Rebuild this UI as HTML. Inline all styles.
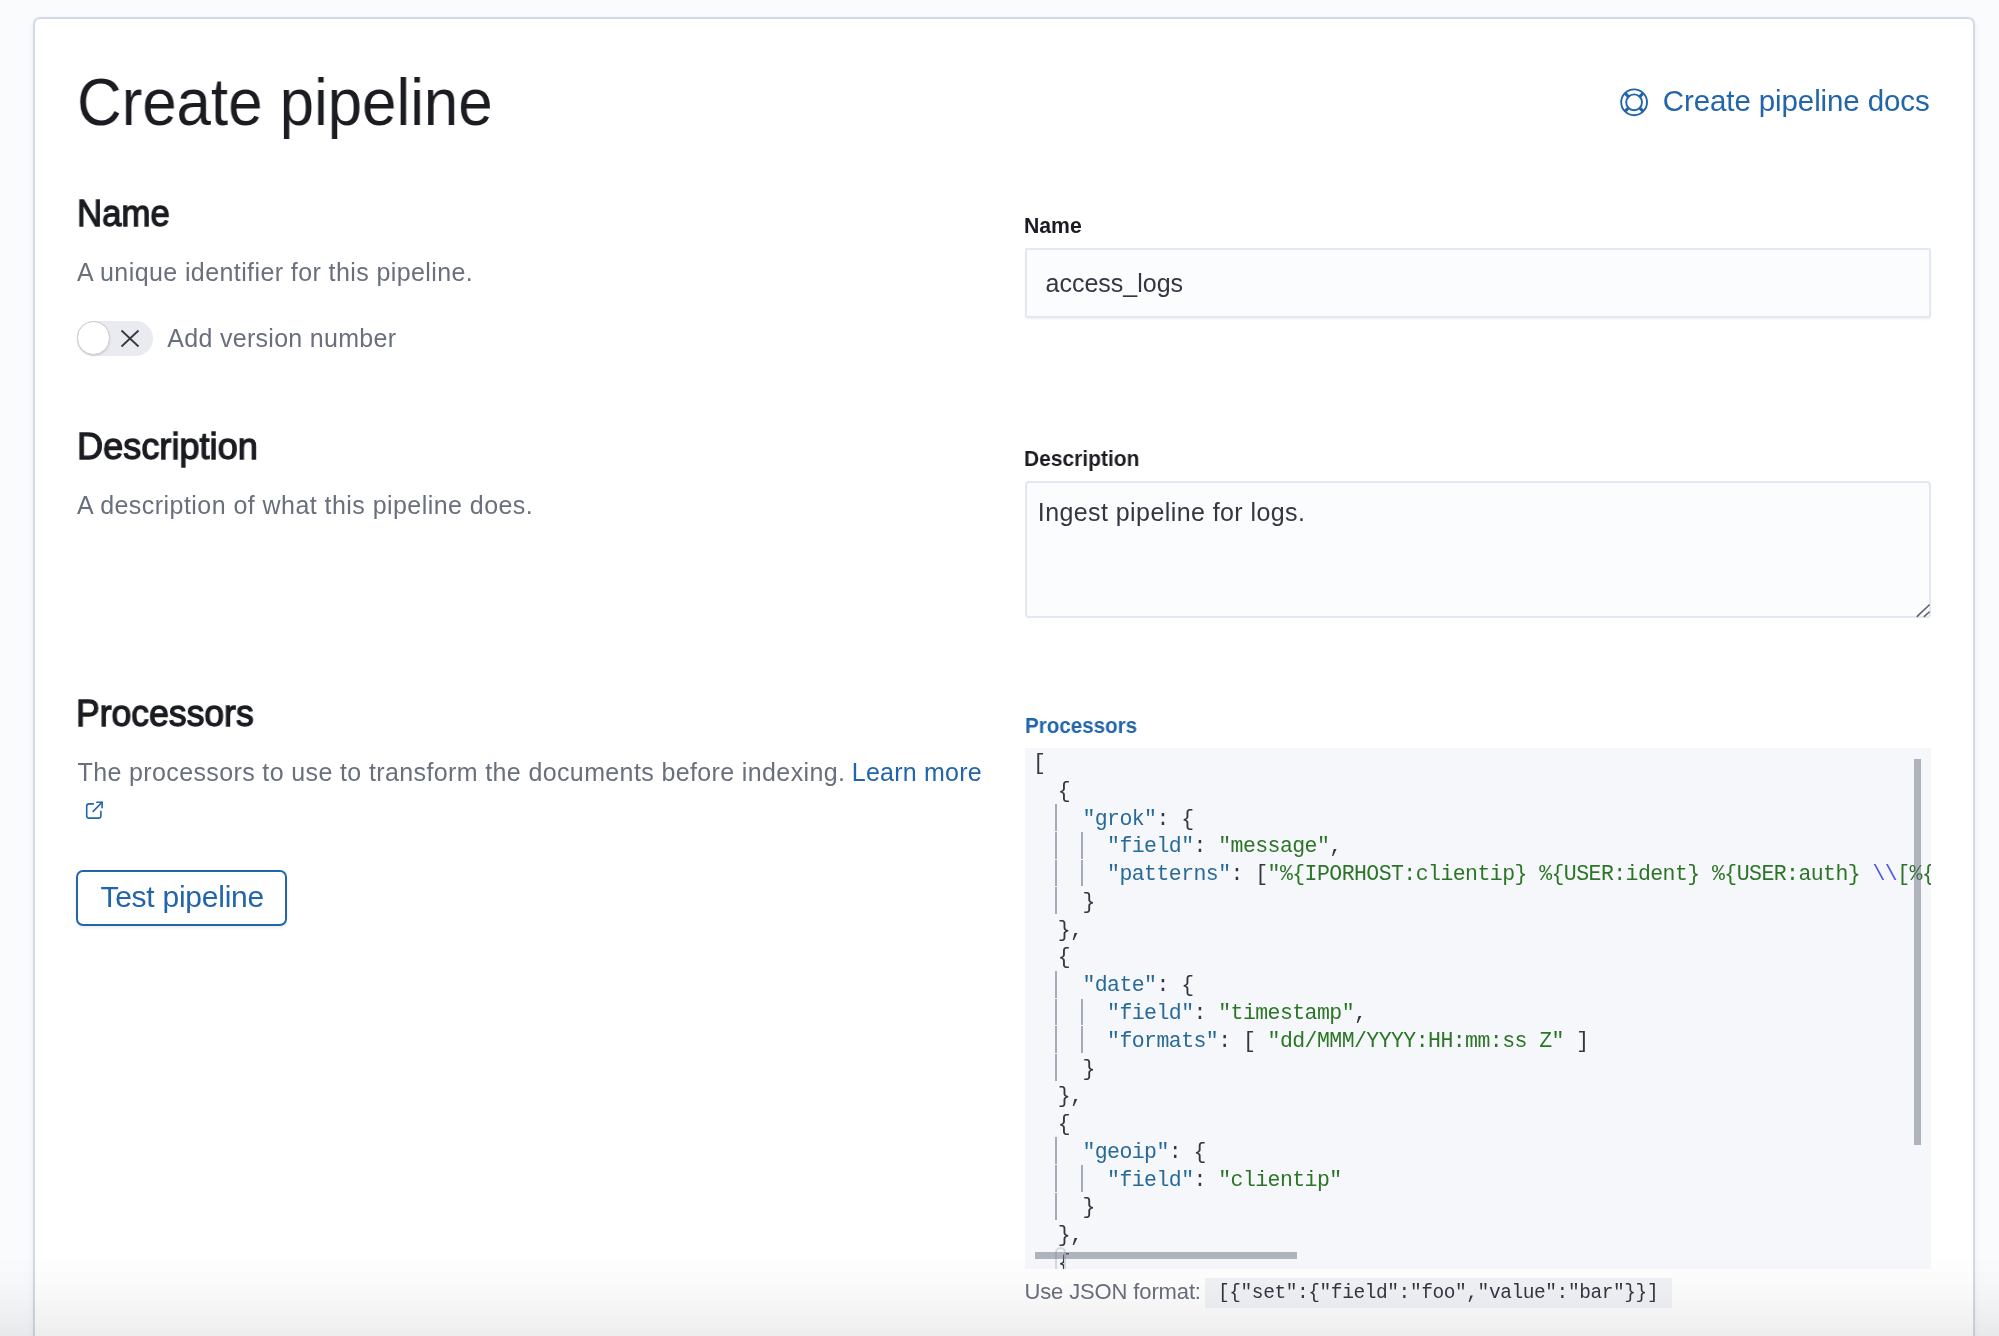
<!DOCTYPE html>
<html><head><meta charset="utf-8"><title>Create pipeline</title>
<style>
html,body{margin:0;padding:0;}
body{width:1999px;height:1336px;overflow:hidden;will-change:transform;background:#FAFBFD;position:relative;font-family:'Liberation Sans', sans-serif;}
.panel{position:absolute;left:33px;top:17px;width:1938px;height:1400px;background:#fff;border:2px solid #D3DAE6;border-radius:7px;box-shadow:0 1px 4px rgba(0,0,0,0.05),0 3px 10px rgba(0,0,0,0.035);}
.t{position:absolute;white-space:pre;}
.input{position:absolute;left:1025px;width:906px;background:#FBFCFD;box-shadow:inset 0 0 0 2px #E4E7EF, 0 2px 3px -1px rgba(152,162,179,0.18);border-radius:2px;}
.code{position:absolute;left:1025px;top:748px;width:906px;height:521px;background:#F5F7FA;overflow:hidden;}
.cl{position:absolute;left:8px;height:27.78px;line-height:27.78px;font-family:'Liberation Mono', monospace;font-size:21.5px;letter-spacing:-0.557px;white-space:pre;color:#343741;}
.guide{position:absolute;width:2px;background:#A3AABA;}
.fade{position:absolute;left:0;top:1256px;width:1999px;height:80px;background:linear-gradient(to bottom, rgba(0,0,0,0) 0%, rgba(0,0,0,0.018) 40%, rgba(0,0,0,0.045) 70%, rgba(0,0,0,0.072) 100%);}
</style></head><body>
<div class="panel"></div>
<!-- header icon -->
<svg style="position:absolute;left:1619px;top:87px" width="31" height="31" viewBox="0 0 31 31">
 <g fill="none" stroke="#2265AB" stroke-width="1.9">
  <circle cx="15.1" cy="15.3" r="12.9"/>
  <circle cx="15.1" cy="15.3" r="7.9"/>
 </g>
 <g stroke="#2265AB" stroke-width="3.2">
  <line x1="6.0" y1="6.2" x2="9.6" y2="9.8"/><line x1="24.2" y1="6.2" x2="20.6" y2="9.8"/>
  <line x1="6.0" y1="24.4" x2="9.6" y2="20.8"/><line x1="24.2" y1="24.4" x2="20.6" y2="20.8"/>
 </g>
</svg>
<!-- toggle -->
<div style="position:absolute;left:77px;top:321px;width:76px;height:35px;border-radius:18px;background:#E9EBF0"></div>
<div style="position:absolute;left:76.5px;top:321px;width:31.6px;height:31.6px;border-radius:50%;background:#fff;border:1.6px solid #C8CBD2;box-shadow:0 1px 2px rgba(0,0,0,0.12)"></div>
<svg style="position:absolute;left:120px;top:329px" width="20" height="19" viewBox="0 0 20 19"><g stroke="#343741" stroke-width="1.8"><line x1="1.5" y1="1.5" x2="18.5" y2="17.5"/><line x1="18.5" y1="1.5" x2="1.5" y2="17.5"/></g></svg>
<!-- external link icon -->
<svg style="position:absolute;left:75px;top:790px" width="40" height="40" viewBox="0 0 40 40"><g fill="none" stroke="#2265AB" stroke-width="1.6" stroke-linecap="round" stroke-linejoin="round"><path d="M18.3 13.9H14Q11.7 13.9 11.7 16.2V25.8Q11.7 28.1 14 28.1H23.6Q25.9 28.1 25.9 25.8V21.2"/><path d="M21.8 12.3H27.1V17.8"/><path d="M27.1 12.3L18.2 21.4"/></g></svg>
<!-- button -->
<div style="position:absolute;left:76px;top:870px;width:207px;height:52px;border:2px solid #2265AB;border-radius:7px;box-shadow:0 2px 3px rgba(0,0,0,0.08)"></div>
<!-- inputs -->
<div class="input" style="top:248px;height:70px"></div>
<div class="input" style="top:481px;height:137px;border-radius:4px;box-shadow:inset 0 0 0 2px #E4E7EF"></div>
<svg style="position:absolute;left:1910px;top:600px" width="21" height="19" viewBox="0 0 21 19"><g stroke="#5C5F66" stroke-width="1.5" stroke-linecap="round"><line x1="7.2" y1="16.4" x2="19.2" y2="5"/><line x1="14.4" y1="16.4" x2="19.2" y2="12"/></g></svg>
<!-- code editor -->
<div class="code">
<div class="cl" style="top:2.00px">[</div>
<div class="cl" style="top:29.78px">  {</div>
<div class="cl" style="top:57.56px">    <span style="color:#286A97">"grok"</span>: {</div>
<div class="cl" style="top:85.34px">      <span style="color:#286A97">"field"</span>: <span style="color:#2C7527">"message"</span>,</div>
<div class="cl" style="top:113.12px">      <span style="color:#286A97">"patterns"</span>: [<span style="color:#2C7527">"%{IPORHOST:clientip} %{USER:ident} %{USER:auth} </span><span style="color:#4F5BE0">\\</span><span style="color:#2C7527">[%{HTTPDATE:timestamp}</span></div>
<div class="cl" style="top:140.90px">    }</div>
<div class="cl" style="top:168.68px">  },</div>
<div class="cl" style="top:196.46px">  {</div>
<div class="cl" style="top:224.24px">    <span style="color:#286A97">"date"</span>: {</div>
<div class="cl" style="top:252.02px">      <span style="color:#286A97">"field"</span>: <span style="color:#2C7527">"timestamp"</span>,</div>
<div class="cl" style="top:279.80px">      <span style="color:#286A97">"formats"</span>: [ <span style="color:#2C7527">"dd/MMM/YYYY:HH:mm:ss Z"</span> ]</div>
<div class="cl" style="top:307.58px">    }</div>
<div class="cl" style="top:335.36px">  },</div>
<div class="cl" style="top:363.14px">  {</div>
<div class="cl" style="top:390.92px">    <span style="color:#286A97">"geoip"</span>: {</div>
<div class="cl" style="top:418.70px">      <span style="color:#286A97">"field"</span>: <span style="color:#2C7527">"clientip"</span></div>
<div class="cl" style="top:446.48px">    }</div>
<div class="cl" style="top:474.26px">  },</div>
<div class="cl" style="top:502.04px">  {</div>
<div class="guide" style="left:30.0px;top:56.06px;height:26.78px"></div>
<div class="guide" style="left:30.0px;top:83.84px;height:26.78px"></div>
<div class="guide" style="left:55.5px;top:83.84px;height:26.78px"></div>
<div class="guide" style="left:30.0px;top:111.62px;height:26.78px"></div>
<div class="guide" style="left:55.5px;top:111.62px;height:26.78px"></div>
<div class="guide" style="left:30.0px;top:139.40px;height:26.78px"></div>
<div class="guide" style="left:30.0px;top:222.74px;height:26.78px"></div>
<div class="guide" style="left:30.0px;top:250.52px;height:26.78px"></div>
<div class="guide" style="left:55.5px;top:250.52px;height:26.78px"></div>
<div class="guide" style="left:30.0px;top:278.30px;height:26.78px"></div>
<div class="guide" style="left:55.5px;top:278.30px;height:26.78px"></div>
<div class="guide" style="left:30.0px;top:306.08px;height:26.78px"></div>
<div class="guide" style="left:30.0px;top:389.42px;height:26.78px"></div>
<div class="guide" style="left:30.0px;top:417.20px;height:26.78px"></div>
<div class="guide" style="left:55.5px;top:417.20px;height:26.78px"></div>
<div class="guide" style="left:30.0px;top:444.98px;height:26.78px"></div>
<div style="position:absolute;left:889px;top:11px;width:7px;height:386px;background:rgba(105,112,125,0.5)"></div>
<div style="position:absolute;left:29.6px;top:499.3px;width:7.5px;height:30px;border:2px solid #D3D9E4;border-radius:6px"></div>
<div style="position:absolute;left:10px;top:504px;width:262px;height:6.8px;background:rgba(105,112,125,0.5)"></div>
</div>
<!-- help code span -->
<div style="position:absolute;left:1205px;top:1278px;width:467px;height:30px;background:#F1F3F7"></div>
<div id="helpcode" class="t" style="left:1218px;top:1276.5px;font:19.5px/32px 'Liberation Mono', monospace;letter-spacing:-0.415px;color:#343741">[{"set":{"field":"foo","value":"bar"}}]</div>
<div id="title" class="t" style="left:77.00px;top:61.01px;font:400 66px/82px 'Liberation Sans', sans-serif;color:#1A1C21;letter-spacing:0.000px;transform:scaleX(0.9361);transform-origin:0 0">Create pipeline</div>
<div id="docs" class="t" style="left:1662.80px;top:81.61px;font:400 29.5px/37px 'Liberation Sans', sans-serif;color:#2265AB;letter-spacing:-0.105px">Create pipeline docs</div>
<div id="h_name" class="t" style="left:77.00px;top:190.01px;font:400 37.8px/47px 'Liberation Sans', sans-serif;color:#1A1C21;letter-spacing:0.000px;transform:scaleX(0.9205);transform-origin:0 0;-webkit-text-stroke:1.3px #1A1C21">Name</div>
<div id="d_name" class="t" style="left:77.00px;top:257.01px;font:400 25px/31px 'Liberation Sans', sans-serif;color:#69707D;letter-spacing:0.405px">A unique identifier for this pipeline.</div>
<div id="ver" class="t" style="left:167.30px;top:323.01px;font:400 25px/31px 'Liberation Sans', sans-serif;color:#69707D;letter-spacing:0.294px">Add version number</div>
<div id="h_desc" class="t" style="left:77.00px;top:422.51px;font:400 37.8px/47px 'Liberation Sans', sans-serif;color:#1A1C21;letter-spacing:0.000px;transform:scaleX(0.9567);transform-origin:0 0;-webkit-text-stroke:1.3px #1A1C21">Description</div>
<div id="d_desc" class="t" style="left:77.00px;top:489.71px;font:400 25px/31px 'Liberation Sans', sans-serif;color:#69707D;letter-spacing:0.450px">A description of what this pipeline does.</div>
<div id="h_proc" class="t" style="left:76.00px;top:690.01px;font:400 37.8px/47px 'Liberation Sans', sans-serif;color:#1A1C21;letter-spacing:0.000px;transform:scaleX(0.9398);transform-origin:0 0;-webkit-text-stroke:1.3px #1A1C21">Processors</div>
<div id="d_proc" class="t" style="left:77.50px;top:757.31px;font:400 25px/31px 'Liberation Sans', sans-serif;color:#69707D;letter-spacing:0.375px">The processors to use to transform the documents before indexing.</div>
<div id="learn" class="t" style="left:851.80px;top:757.31px;font:400 25px/31px 'Liberation Sans', sans-serif;color:#2265AB;letter-spacing:0.222px">Learn more</div>
<div id="btn" class="t" style="left:100.40px;top:877.61px;font:400 30px/38px 'Liberation Sans', sans-serif;color:#2265AB;letter-spacing:-0.250px">Test pipeline</div>
<div id="l_name" class="t" style="left:1024.00px;top:212.00px;font:700 22.5px/28px 'Liberation Sans', sans-serif;color:#1A1C21;letter-spacing:0.000px;transform:scaleX(0.9430);transform-origin:0 0">Name</div>
<div id="v_name" class="t" style="left:1045.50px;top:268.01px;font:400 25px/31px 'Liberation Sans', sans-serif;color:#343741;letter-spacing:0.000px">access_logs</div>
<div id="l_desc" class="t" style="left:1024.00px;top:444.81px;font:700 22.5px/28px 'Liberation Sans', sans-serif;color:#1A1C21;letter-spacing:0.000px;transform:scaleX(0.9326);transform-origin:0 0">Description</div>
<div id="v_desc" class="t" style="left:1037.80px;top:497.31px;font:400 25px/31px 'Liberation Sans', sans-serif;color:#343741;letter-spacing:0.417px">Ingest pipeline for logs.</div>
<div id="l_proc" class="t" style="left:1025.20px;top:712.00px;font:700 22.5px/28px 'Liberation Sans', sans-serif;color:#2265AB;letter-spacing:0.000px;transform:scaleX(0.9150);transform-origin:0 0">Processors</div>
<div id="help" class="t" style="left:1024.50px;top:1277.81px;font:400 22px/28px 'Liberation Sans', sans-serif;color:#69707D;letter-spacing:-0.133px">Use JSON format:</div>
<div class="fade"></div>
</body></html>
